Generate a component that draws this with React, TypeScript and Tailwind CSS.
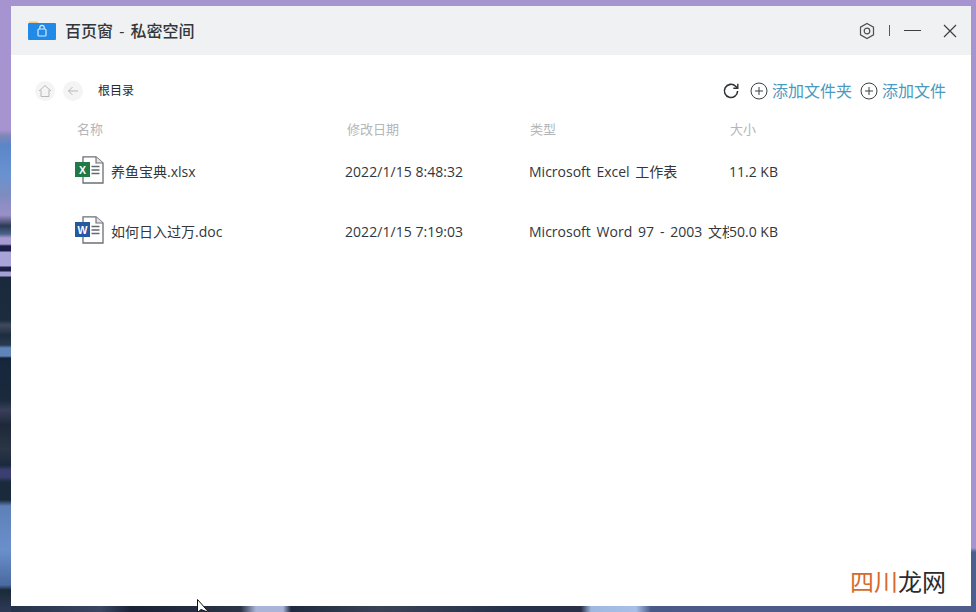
import React from "react";

const CJK = "font-['Open_Sans','Noto_Sans_CJK_SC',sans-serif]";

const Hex = () => (
  <svg width="18" height="18" viewBox="0 0 18 18" fill="none" stroke="#4d4f53" strokeWidth="1.2">
    <path d="M9 1.5 15.5 5.2v7.6L9 16.5 2.5 12.8V5.2z" />
    <circle cx="9" cy="9" r="2.8" />
  </svg>
);

const Plus = () => (
  <svg width="18" height="18" viewBox="0 0 18 18" fill="none" stroke="#3c4043" strokeWidth="1">
    <circle cx="9" cy="9" r="8" />
    <path d="M9 5v8M5 9h8" />
  </svg>
);

const FileIcon = ({ color, letter }: { color: string; letter: string }) => (
  <svg width="30" height="28" viewBox="0 0 30 28" fill="none" className="block">
    <path d="M9 .8h13L29 7v20H9z" fill="#fff" stroke="#6b6f74" strokeWidth="1.3" />
    <path d="M22 1v6h7" fill="#e4e4e4" stroke="#6b6f74" strokeWidth="1.1" />
    <path d="M17.5 10.5h8M17.5 14h8M17.5 17.5h8" stroke="#5f6a70" strokeWidth="1.5" />
    <rect x="1" y="6" width="15" height="15" fill={color} />
    <text x="8.5" y="17.5" fontSize="10.5" fontWeight="700" fill="#fff" textAnchor="middle" fontFamily="Liberation Sans">
      {letter}
    </text>
  </svg>
);

export default function App() {
  return (
    <div className={`relative w-[976px] h-[612px] overflow-hidden flex bg-[#a594cf] ${CJK}`}>
      {/* wallpaper: left edge */}
      <div className="w-[11px] shrink-0 h-full bg-[linear-gradient(180deg,#a594cf_0,#a594cf_130px,#7d86b8_136px,#5a86c8_145px,#6a92d0_175px,#7e8cc0_195px,#9b90c8_215px,#2b3a55_226px,#4a6488_234px,#a79bd2_238px,#a79bd2_244px,#1d1f48_246px,#1d1f48_251px,#a9a4d8_252px,#a9a4d8_266px,#1d1f48_267px,#1d1f48_271px,#a5a0d5_272px,#a5a0d5_276px,#1a2a3c_277px,#1c2c3e_320px,#3f4c5c_325px,#1d2d40_335px,#2a3a50_345px,#5f85b8_348px,#5f85b8_356px,#15263c_358px,#1b2a3c_400px,#3a3f5a_410px,#1d2838_425px,#2a3545_450px,#1a2a3c_465px,#3b3f70_470px,#3b3f70_477px,#1a2a3c_482px,#1a2a3c_500px,#5e80b8_506px,#6a8fcb_550px,#4a6aa0_585px,#1a2a38_590px,#2f3a58_612px)]" />
      <div className="w-[960px] shrink-0 h-full flex flex-col">
        <div className="h-[6px] shrink-0 bg-[#a594cf]" />
        <div className="h-[600px] shrink-0 bg-white flex flex-col">
          <header className="h-[49px] shrink-0 bg-[#eff1f3] flex items-center pl-[17px] pr-[14px]">
            <svg width="28" height="22" viewBox="0 0 28 22" className="shrink-0 mt-[-1px]">
              <path d="M1 2.5h8l2 2H1z" fill="#f3c77f" />
              <rect y="4" width="28" height="17" rx="1" fill="#2189e6" />
              <rect x="10" y="10" width="8" height="7" rx="1" fill="none" stroke="#d5ebff" strokeWidth="1.2" />
              <path d="M11.8 10V8.6a2.2 2.2 0 0 1 4.4 0V10" fill="none" stroke="#d5ebff" strokeWidth="1.2" />
            </svg>
            <span className="ml-[9px] text-[16px] font-medium text-[#33373b] leading-none whitespace-pre [word-spacing:2px]">百页窗 - 私密空间</span>
            <div className="ml-auto flex items-center">
              <Hex />
              <span className="ml-[13px] w-px h-[11px] bg-[#55585c]" />
              <span className="ml-[14px] w-[17px] h-px bg-[#3c3f43]" />
              <svg width="14" height="14" viewBox="0 0 14 14" className="ml-[22px]" stroke="#3c3f43" strokeWidth="1.2">
                <path d="M1 1l12 12M13 1 1 13" />
              </svg>
            </div>
          </header>

          <div className="h-[72px] shrink-0 flex items-center pl-[24px] pr-[25px]">
            <span className="w-[20px] h-[20px] rounded-full bg-[#f4f4f4] flex items-center justify-center">
              <svg width="14" height="14" viewBox="0 0 14 14" fill="none" stroke="#b6b8ba" strokeWidth="1">
                <path d="M1 7 7 1.5 13 7M3 6v6.5h8V6" />
              </svg>
            </span>
            <span className="ml-[8px] w-[20px] h-[20px] rounded-full bg-[#f4f4f4] flex items-center justify-center">
              <svg width="12" height="12" viewBox="0 0 12 12" fill="none" stroke="#b6b8ba" strokeWidth="1">
                <path d="M11 6H1.5M5.5 2 1.5 6l4 4" />
              </svg>
            </span>
            <span className="ml-[15px] text-[12px] text-[#26292c]">根目录</span>
            <div className="ml-auto flex items-center">
              <svg width="18" height="18" viewBox="0 0 18 18" fill="none" stroke="#2f3235" strokeWidth="1.6">
                <path d="M15.6 9a6.6 6.6 0 1 1-2-4.8L15.5 6" />
                <path d="M15.8 1.8v4.5h-4.5" strokeWidth="1.4" />
              </svg>
              <span className="ml-[10px] flex"><Plus /></span>
              <span className="ml-[4px] text-[16px] text-[#4a9ac2]">添加文件夹</span>
              <span className="ml-[8px] flex"><Plus /></span>
              <span className="ml-[4px] text-[16px] text-[#4a9ac2]">添加文件</span>
            </div>
          </div>

          <div className="pl-[66px] h-[18px] flex items-center text-[13px] text-[#b4b6b8] mt-[-6px]">
            <span className="w-[270px]">名称</span>
            <span className="w-[183px]">修改日期</span>
            <span className="w-[200px]">类型</span>
            <span>大小</span>
          </div>

          <div className="pl-[63px] mt-[14px] h-[36px] flex items-center text-[14px] text-[#33363a]">
            <span className="w-[37px] shrink-0 -mt-[2px]"><FileIcon color="#1f7a47" letter="X" /></span>
            <span className="w-[234px] shrink-0">养鱼宝典.xlsx</span>
            <span className="w-[184px] shrink-0 tracking-[0.05px]">2022/1/15 8:48:32</span>
            <span className="w-[200px] shrink-0 whitespace-nowrap overflow-hidden [word-spacing:2px]">Microsoft Excel 工作表</span>
            <span>11.2 KB</span>
          </div>

          <div className="pl-[63px] mt-[24px] h-[36px] flex items-center text-[14px] text-[#33363a]">
            <span className="w-[37px] shrink-0 -mt-[2px]"><FileIcon color="#25589e" letter="W" /></span>
            <span className="w-[234px] shrink-0">如何日入过万.doc</span>
            <span className="w-[184px] shrink-0 tracking-[0.05px]">2022/1/15 7:19:03</span>
            <span className="w-[200px] shrink-0 whitespace-nowrap overflow-hidden [word-spacing:2.2px]">Microsoft Word 97 - 2003 文档</span>
            <span>50.0 KB</span>
          </div>

          <div className="mt-auto mb-[12px] mr-[25px] self-end text-[24px] leading-none">
            <span className="text-[#d9692a]">四川</span>
            <span className="text-[#2b2b2b]">龙网</span>
          </div>
        </div>
        {/* wallpaper: bottom edge */}
        <div className="h-[6px] shrink-0 bg-[linear-gradient(90deg,#26324a_0,#3a4662_90px,#1a2238_120px,#2c3448_230px,#a9b4d8_245px,#a9b4d8_272px,#1e2a40_280px,#3a4256_370px,#25304a_500px,#2a3048_570px,#9fb8e0_580px,#a8c0e8_625px,#4a5a88_640px,#4f5c8c_949px,#4f5c8c_960px)]" />
      </div>
      {/* wallpaper: right edge */}
      <div className="w-[5px] shrink-0 h-full bg-[linear-gradient(180deg,#a594cf_0,#a594cf_548px,#4a5f90_552px,#4a5f90_612px)]" />

      {/* mouse pointer caught at the bottom edge */}
      <svg width="14" height="14" viewBox="0 0 14 14" className="absolute left-[197px] top-[599px]">
        <path d="M.5.5v13l3.5-3 8 3z" fill="#fff" stroke="#111" strokeWidth="1" />
      </svg>
    </div>
  );
}
